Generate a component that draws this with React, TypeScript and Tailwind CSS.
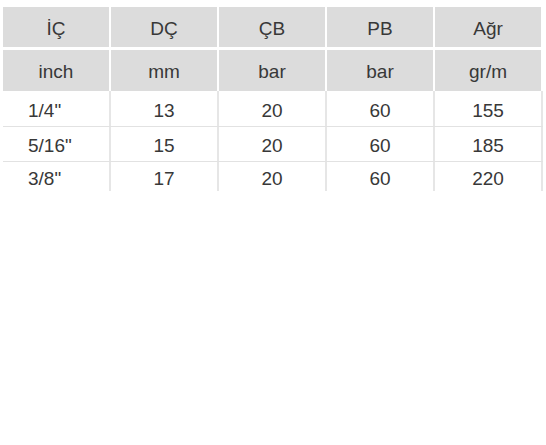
import React from "react";

const head = ["İÇ", "DÇ", "ÇB", "PB", "Ağr"];
const units = ["inch", "mm", "bar", "bar", "gr/m"];
const rows = [
  ["1/4\"", "13", "20", "60", "155"],
  ["5/16\"", "15", "20", "60", "185"],
  ["3/8\"", "17", "20", "60", "220"],
];

const App = () => {
  return (
    <div
      className="w-[546px] h-[445px] bg-white text-[#383838] text-[19px] leading-none"
      style={{ fontFamily: '"Liberation Sans", Arial, sans-serif' }}
    >
      <div className="ml-[3px] pt-[7px] w-[540px]">
        <div className="grid grid-cols-5 h-[40px]">
          {head.map((h, i) => (
            <div
              key={i}
              className="flex items-center justify-center bg-[#dcdcdc] border-r-2 border-white pt-[3px]"
            >
              {h}
            </div>
          ))}
        </div>
        <div className="grid grid-cols-5 h-[41px] mt-[3px]">
          {units.map((u, i) => (
            <div
              key={i}
              className="flex items-center justify-center bg-[#dcdcdc] border-r-2 border-white pt-[1px]"
            >
              {u}
            </div>
          ))}
        </div>
        {rows.map((r, ri) => (
          <div
            key={ri}
            className={
              ri === 2
                ? "grid grid-cols-5 h-[30px] border-t border-[#e2e2e2]"
                : ri === 0
                ? "grid grid-cols-5 h-[35px]"
                : "grid grid-cols-5 h-[35px] border-t border-[#e2e2e2]"
            }
          >
            {r.map((c, ci) => (
              <div
                key={ci}
                className={
                  ci === 0
                    ? "flex items-center pl-[25px] border-r-2 border-[#e6e6e6] pt-[3px]"
                    : "flex items-center justify-center border-r-2 border-[#e6e6e6] pt-[3px]"
                }
              >
                {c}
              </div>
            ))}
          </div>
        ))}
      </div>
    </div>
  );
};

export default App;
